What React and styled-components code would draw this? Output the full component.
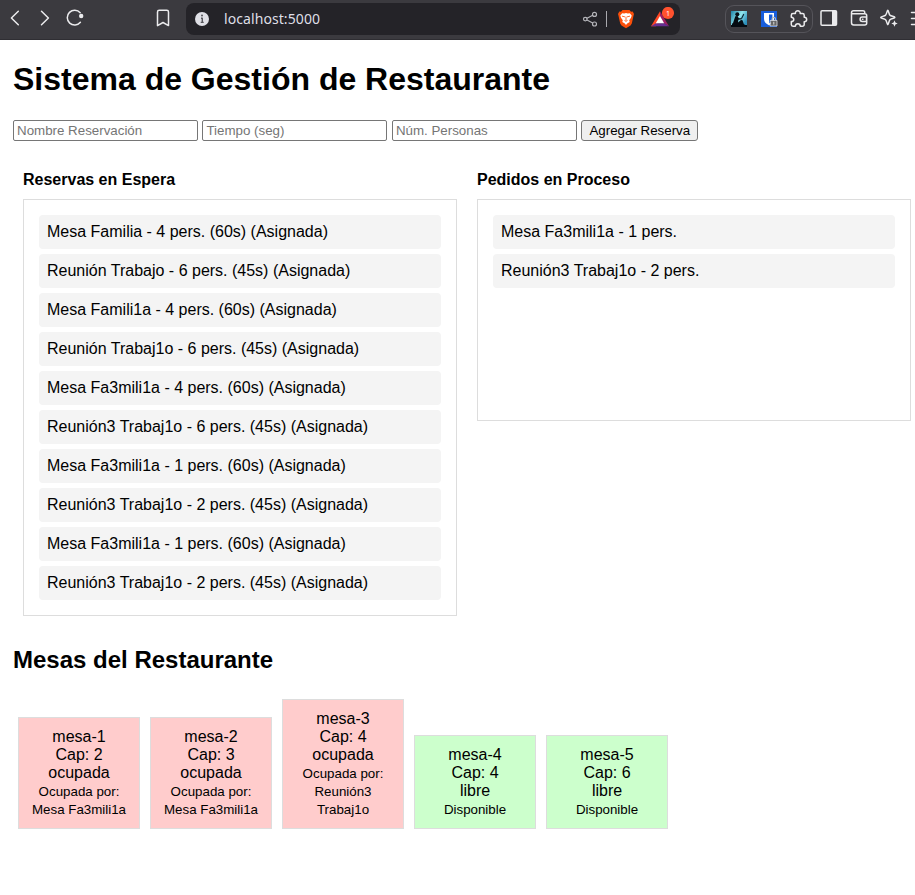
import React from "react";
import styled, { createGlobalStyle } from "styled-components";

const GlobalStyle = createGlobalStyle`
  html, body { margin: 0; background: #fff; overflow: hidden; }
  body { font-family: "Liberation Sans", Arial, sans-serif; font-size: 16px; color: #000; }
`;

const Icon = styled.svg`
  flex: none;
  display: block;
  width: ${(p) => p.$w || 20}px;
  height: 24px;
  margin-left: ${(p) => p.$gap || 0}px;
  fill: none;
  stroke: ${(p) => p.$color || "#ebebed"};
  stroke-width: 1.5;
  stroke-linecap: round;
  stroke-linejoin: round;
`;

const Toolbar = styled.header`
  box-sizing: border-box;
  height: 40px;
  padding-bottom: 1px;
  background: #3b3a3f;
  border-bottom: 1px solid #2f2e33;
  display: flex;
  align-items: center;
  overflow: hidden;

  > ${Icon} {
    margin-bottom: 2px;
  }
`;

const AddressBar = styled.div`
  box-sizing: border-box;
  flex: none;
  width: 494px;
  height: 32px;
  margin-left: 13px;
  padding-left: 6px;
  border-radius: 8px;
  background: #242328;
  display: flex;
  align-items: center;
`;

const Address = styled.span`
  flex: none;
  width: 356px;
  margin-left: 12px;
  font: 14px/20px "Noto Sans", sans-serif;
  letter-spacing: 0.08px;
  color: #dfdfe6;
`;

const Divider = styled.span`
  width: 1px;
  height: 16px;
  margin-left: 6px;
  background: #a9a9ae;
`;

const Extensions = styled.div`
  box-sizing: border-box;
  flex: none;
  width: 88px;
  height: 28px;
  margin-left: 45px;
  border: 1px solid #55545a;
  border-radius: 9px;
  display: flex;
  align-items: center;
`;

const Page = styled.main`
  padding: 21px 0 0 13px;
`;

const Title = styled.h1`
  margin: 0;
  font-size: 32px;
  line-height: 37px;
`;

const Form = styled.form`
  display: flex;
  gap: 4.45px;
  margin-top: 22px;
`;

const Field = styled.input`
  box-sizing: border-box;
  width: 185px;
  height: 21px;
  padding: 1px 3px;
  border: 1px solid #767676;
  border-radius: 2px;
  background: #fff;
  font: 13.333px "Liberation Sans", Arial, sans-serif;
  &::placeholder { color: #757575; }
`;

const Submit = styled.button`
  box-sizing: border-box;
  width: 117px;
  height: 21px;
  padding: 1px 6px;
  border: 1px solid #767676;
  border-radius: 3px;
  background: #efefef;
  color: #000;
  font: 13.333px "Liberation Sans", Arial, sans-serif;
  white-space: nowrap;
`;

const Columns = styled.div`
  display: flex;
  align-items: flex-start;
  gap: 20px;
  margin: 30px 0 0 10px;
`;

const Column = styled.section`
  width: 434px;
`;

const ColumnTitle = styled.h3`
  margin: 0 0 10px;
  font-size: 16px;
  line-height: 18px;
`;

const List = styled.div`
  box-sizing: border-box;
  min-height: 222px;
  padding: 15px;
  border: 1px solid #ddd;
  display: flex;
  flex-direction: column;
  gap: 5px;
`;

const Row = styled.div`
  padding: 8px;
  border-radius: 4px;
  background: #f4f4f4;
  line-height: 18px;
`;

const Subtitle = styled.h2`
  margin: 30px 0 0;
  font-size: 24px;
  line-height: 28px;
`;

const Tables = styled.div`
  display: flex;
  align-items: flex-end;
  gap: 10px;
  margin: 25px 0 0 5px;
`;

const TableCard = styled.div`
  box-sizing: border-box;
  width: 122px;
  padding: 10px;
  border: 1px solid #ddd;
  background: ${(p) => (p.$busy ? "#fcc" : "#cfc")};
  text-align: center;
`;

const Note = styled.small`
  font-size: 13.333px;
`;

const waiting = [
  "Mesa Familia - 4 pers. (60s) (Asignada)",
  "Reunión Trabajo - 6 pers. (45s) (Asignada)",
  "Mesa Famili1a - 4 pers. (60s) (Asignada)",
  "Reunión Trabaj1o - 6 pers. (45s) (Asignada)",
  "Mesa Fa3mili1a - 4 pers. (60s) (Asignada)",
  "Reunión3 Trabaj1o - 6 pers. (45s) (Asignada)",
  "Mesa Fa3mili1a - 1 pers. (60s) (Asignada)",
  "Reunión3 Trabaj1o - 2 pers. (45s) (Asignada)",
  "Mesa Fa3mili1a - 1 pers. (60s) (Asignada)",
  "Reunión3 Trabaj1o - 2 pers. (45s) (Asignada)",
];

const inProcess = ["Mesa Fa3mili1a - 1 pers.", "Reunión3 Trabaj1o - 2 pers."];

const tables = [
  { name: "mesa-1", seats: 2, guest: "Mesa Fa3mili1a" },
  { name: "mesa-2", seats: 3, guest: "Mesa Fa3mili1a" },
  { name: "mesa-3", seats: 4, guest: "Reunión3 Trabaj1o" },
  { name: "mesa-4", seats: 4 },
  { name: "mesa-5", seats: 6 },
];

function BrowserToolbar() {
  return (
    <Toolbar>
      <Icon $gap={5} viewBox="0 0 20 24">
        <path d="M13.3 5.2 6.4 12l6.9 6.8" />
      </Icon>
      <Icon $gap={10} viewBox="0 0 20 24">
        <path d="M6.5 5.2 13.4 12l-6.9 6.8" />
      </Icon>
      <Icon $gap={10} viewBox="0 0 20 24">
        <path d="M15.2 6.7A7.4 7.4 0 1 0 15.4 16.300" />
        <circle cx="16.200" cy="10" r="2.200" fill="#ebebed" stroke="none" />
      </Icon>
      <Icon $gap={68} viewBox="0 0 20 24">
        <path d="M4.500 19.600V6a1.700 1.700 0 0 1 1.700-1.700h7.600A1.700 1.700 0 0 1 15.500 6v13.600L10 16.500z" />
      </Icon>
      <AddressBar>
        <Icon viewBox="0 0 20 24">
          <circle cx="10" cy="12" r="7" fill="#dfdfe5" stroke="none" />
          <path d="M9 11.200h1.300v4M8.700 15.400h3" stroke="#55555b" strokeWidth="1.400" strokeLinecap="butt" />
          <circle cx="10" cy="8.500" r="1" fill="#55555b" stroke="none" />
        </Icon>
        <Address>localhost:5000</Address>
        <Icon $color="#b4b4b9" viewBox="0 0 20 24">
          <path d="m7 11.200 5.700-2.900M7 13l5.700 3" strokeWidth="1.200" />
          <circle cx="5.300" cy="12.100" r="1.800" strokeWidth="1.200" />
          <circle cx="14.500" cy="7.400" r="2" strokeWidth="1.200" />
          <circle cx="14.500" cy="17" r="2" strokeWidth="1.200" />
        </Icon>
        <Divider />
        <Icon $gap={9} viewBox="0 0 20 24">
          <path d="M6.500 3h7l1.500 1.700 1.700-.2L18 7.100l-.5 1.700-1.700 7.700-1.300 2-4.500 2.700-4.500-2.700-1.300-2-1.700-7.700L2 7.100l1.300-2.600 1.700.2z" fill="#fb4f0a" stroke="none" />
          <path d="m6.200 6.200 2 .4 1.800-.5 1.800.5 2-.4 1.900 2.400-.7 2.100-1.800 2.600.5 1.700-2.500 1.500L10 18l-1.200-1.500L6.300 15l.5-1.700L5 10.700l-.7-2.100z" fill="#fff" stroke="none" />
          <path d="m6.300 9.200 2.300.6M13.700 9.200l-2.300.6M10 10v3m-1.200.6 1.200.7 1.200-.7" stroke="#fb5a1c" strokeWidth=".9" />
        </Icon>
        <Icon $gap={14} $w={28} viewBox="0 0 28 24">
          <g stroke="none">
            <path d="M10 4.200 1 19.200h4.800L10 12z" fill="#ff4724" />
            <path d="m10 4.200 9 15-4.800-2.800L10 12z" fill="#9e1f63" />
            <path d="M1 19.200h18l-4.800-3H5.800z" fill="#662d91" />
            <path d="m10 9 4.200 7.200H5.800z" fill="#fff" />
            <circle cx="18" cy="6" r="6.100" fill="#ff512e" />
            <text x="18" y="8.700" textAnchor="middle" fill="#fff" fontFamily="Noto Sans, sans-serif" fontSize="7">1</text>
          </g>
        </Icon>
      </AddressBar>
      <Extensions>
        <Icon $gap={3} viewBox="0 0 20 24">
          <defs>
            <linearGradient id="sky" x1="0" x2="1" y1="0" y2=".6">
              <stop offset="0" stopColor="#1f81a6" />
              <stop offset=".55" stopColor="#91e6ee" />
              <stop offset="1" stopColor="#2c8fbb" />
            </linearGradient>
          </defs>
          <g stroke="none">
            <path d="M2 4h16v16H2z" fill="url(#sky)" />
            <path d="M2 18h16v2H2z" fill="#050b12" />
            <circle cx="8.300" cy="7.300" r="2" fill="#050b12" />
            <path d="M6.300 9.300 8.500 9l1.300 2.200 2.700.1.300 1-3.400.5-.4 2.600 3-2.500 1.500.3 1.400 4 1.800 1H3v-1.500l1-.8z" fill="#050b12" />
          </g>
          <path d="m12.700 11.300 1.900-3.800" stroke="#0a2938" strokeWidth="1.200" />
        </Icon>
        <Icon $gap={10} viewBox="0 0 20 24">
          <g stroke="none">
            <path d="M2 4h16v16H2z" fill="#175ddc" />
            <path d="M5 6h10v6c0 3-2 4.700-5 6.200-3-1.500-5-3.200-5-6.200z" fill="#fff" />
            <path d="M10 7.600h3.400V12c0 2-1.300 3.200-3.400 4.300z" fill="#175ddc" />
            <path d="M11.500 13.500H18V19h-6.500z" fill="#666" stroke="#e1e1e1" strokeWidth=".8" />
          </g>
          <path d="M13 13.300v-1.100a1.800 1.800 0 0 1 3.600 0v1.100" stroke="#bbb" strokeWidth="1.100" />
          <path d="M14.800 15.200v2" stroke="#ddd" strokeWidth="1" />
        </Icon>
        <Icon $gap={9} viewBox="0 0 20 24">
          <path d="M5 6.500h2.400c-.6-3.700 5.300-3.700 4.800 0h2.300a1.700 1.700 0 0 1 1.700 1.700v2.100c3.300-.4 3.300 4.800 0 4.400v2.700a1.800 1.800 0 0 1-1.800 1.800h-2.100c-.2-3.300-4.700-3.300-5 0H5a1.700 1.700 0 0 1-1.700-1.700v-2.900c3.300-.3 3.300-4.100 0-4.400v-2A1.700 1.700 0 0 1 5 6.500z" />
        </Icon>
      </Extensions>
      <Icon $gap={6} viewBox="0 0 20 24">
        <rect x="2" y="4.700" width="15.500" height="14.600" rx="1" />
        <path d="M13 5H17.500v14H13z" fill="#ebebed" stroke="none" />
      </Icon>
      <Icon $gap={10} viewBox="0 0 20 24">
        <path d="M15.700 7.500V6.300A1.600 1.600 0 0 0 14 4.700H4.500a2 2 0 0 0-2 2v10a2.200 2.200 0 0 0 2.200 2.200h11a2 2 0 0 0 2-2V9.700a2 2 0 0 0-2-2H2.700M17.500 11h-4.200a2.200 2.200 0 0 0 0 4.400h4.200zM13.500 13.200h.4" />
      </Icon>
      <Icon $gap={10} viewBox="0 0 20 24">
        <path d="M8.800 4.300c.7 0 1 3.500 2.100 4.800 1.200 1.200 5 1.300 5 2.300s-3.800 1.200-5 2.400c-1.100 1.200-1.400 4.900-2.100 4.900s-1-3.700-2.200-4.900c-1.200-1.200-4.900-1.500-4.900-2.400s3.700-1.100 4.900-2.300c1.200-1.300 1.500-4.800 2.200-4.800z" />
        <path d="m15.500 14.300.9 2.300 2.300.9-2.300.9-.9 2.300-.9-2.300-2.300-.9 2.300-.9z" fill="#ebebed" stroke="none" />
      </Icon>
      <Icon $gap={10} viewBox="0 0 20 24">
        <path d="M2.500 6.500H18M2.500 12.500H18M2.500 18.500H18" />
      </Icon>
    </Toolbar>
  );
}

export default function App() {
  return (
    <>
      <GlobalStyle />
      <BrowserToolbar />
      <Page>
        <Title>Sistema de Gestión de Restaurante</Title>
        <Form onSubmit={(e) => e.preventDefault()}>
          <Field placeholder="Nombre Reservación" />
          <Field placeholder="Tiempo (seg)" />
          <Field placeholder="Núm. Personas" />
          <Submit>Agregar Reserva</Submit>
        </Form>
        <Columns>
          <Column>
            <ColumnTitle>Reservas en Espera</ColumnTitle>
            <List>
              {waiting.map((text, i) => (
                <Row key={i}>{text}</Row>
              ))}
            </List>
          </Column>
          <Column>
            <ColumnTitle>Pedidos en Proceso</ColumnTitle>
            <List>
              {inProcess.map((text) => (
                <Row key={text}>{text}</Row>
              ))}
            </List>
          </Column>
        </Columns>
        <Subtitle>Mesas del Restaurante</Subtitle>
        <Tables>
          {tables.map((t) => (
            <TableCard key={t.name} $busy={Boolean(t.guest)}>
              {t.name}
              <br />
              Cap: {t.seats}
              <br />
              {t.guest ? "ocupada" : "libre"}
              <br />
              <Note>{t.guest ? `Ocupada por: ${t.guest}` : "Disponible"}</Note>
            </TableCard>
          ))}
        </Tables>
      </Page>
    </>
  );
}
